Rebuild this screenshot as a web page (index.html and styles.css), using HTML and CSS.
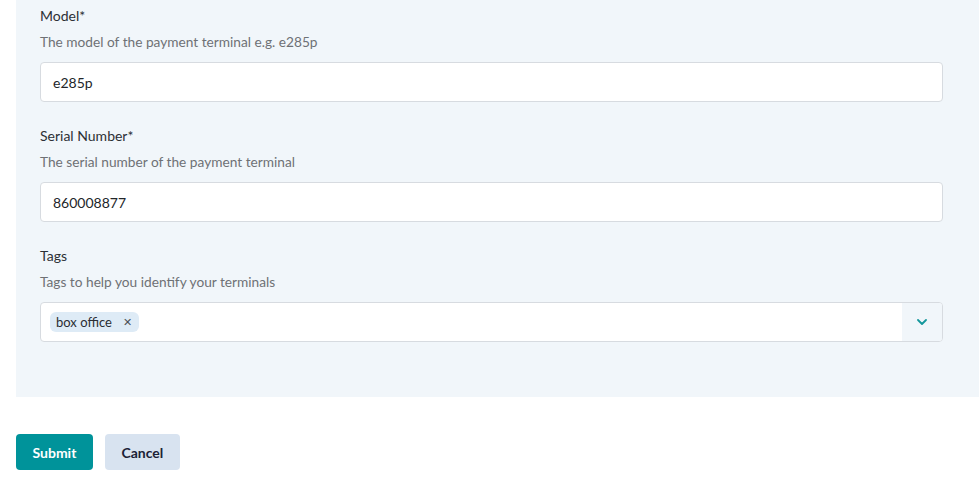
FILE: index.html
```html
<!DOCTYPE html>
<html lang="en">
<head>
<meta charset="utf-8">
<title>Terminal form</title>
<link rel="stylesheet" href="styles.css">
</head>
<body>
<form class="form">
  <div class="panel">
    <div class="field">
      <label class="label">Model*</label>
      <p class="help">The model of the payment terminal e.g. e285p</p>
      <div class="input">e285p</div>
    </div>
    <div class="field">
      <label class="label">Serial Number*</label>
      <p class="help">The serial number of the payment terminal</p>
      <div class="input">860008877</div>
    </div>
    <div class="field">
      <label class="label">Tags</label>
      <p class="help">Tags to help you identify your terminals</p>
      <div class="select">
        <div class="select-values">
          <span class="chip">box office<span class="chip-x">&#x2715;</span></span>
        </div>
        <div class="select-toggle">
          <svg width="10" height="6" viewBox="0 0 10 6"><path d="M1 1l4 4 4-4" fill="none" stroke="#14979c" stroke-width="1.8" stroke-linecap="round" stroke-linejoin="round"/></svg>
        </div>
      </div>
    </div>
  </div>
  <div class="actions">
    <button type="button" class="btn btn-primary">Submit</button>
    <button type="button" class="btn btn-secondary">Cancel</button>
  </div>
</form>
</body>
</html>
```

FILE: styles.css
```css
html, body {
  margin: 0;
  padding: 0;
  background: #ffffff;
  font-family: Lato, "Open Sans", Arial, sans-serif;
  color: #2f3337;
}
.form {
  display: flex;
  flex-direction: column;
}
.panel {
  margin-left: 16px;
  background: #f1f6fa;
  padding: 6px 36px 55px 24px;
  display: flex;
  flex-direction: column;
  gap: 24px;
}
.field {
  display: flex;
  flex-direction: column;
}
.label {
  font-size: 14px;
  line-height: 20px;
  color: #2c3035;
}
.help {
  margin: 6px 0 10px;
  font-size: 13.7px;
  line-height: 20px;
  color: #6e7175;
}
.input {
  height: 40px;
  box-sizing: border-box;
  border: 1px solid #d7dbe0;
  border-radius: 4px;
  background: #fff;
  padding: 0 12px;
  display: flex;
  align-items: center;
  font-size: 14px;
  color: #22262a;
}
.select {
  height: 40px;
  box-sizing: border-box;
  border: 1px solid #d7dbe0;
  border-radius: 4px;
  background: #fff;
  display: flex;
  overflow: hidden;
}
.select-values {
  flex: 1;
  display: flex;
  align-items: center;
  padding: 0 9px;
}
.chip {
  display: inline-flex;
  align-items: center;
  height: 20px;
  padding: 0 7px 0 6px;
  border-radius: 6px;
  background: #deebf6;
  font-size: 13px;
  color: #2a2e33;
}
.chip-x {
  margin-left: 11px;
  font-size: 11px;
  color: #4a4f55;
}
.select-toggle {
  width: 40px;
  background: #f1f6fa;
  display: flex;
  align-items: center;
  justify-content: center;
}
.actions {
  display: flex;
  gap: 12px;
  padding: 37px 0 0 16px;
}
.btn {
  height: 36px;
  border: none;
  border-radius: 4px;
  font-family: Lato, "Open Sans", Arial, sans-serif;
  font-weight: 700;
  font-size: 14px;
  padding: 0 16.5px;
  cursor: pointer;
}
.btn-primary {
  background: #00939a;
  color: #fff;
}
.btn-secondary {
  background: #d8e3f0;
  color: #1b2236;
}
```
